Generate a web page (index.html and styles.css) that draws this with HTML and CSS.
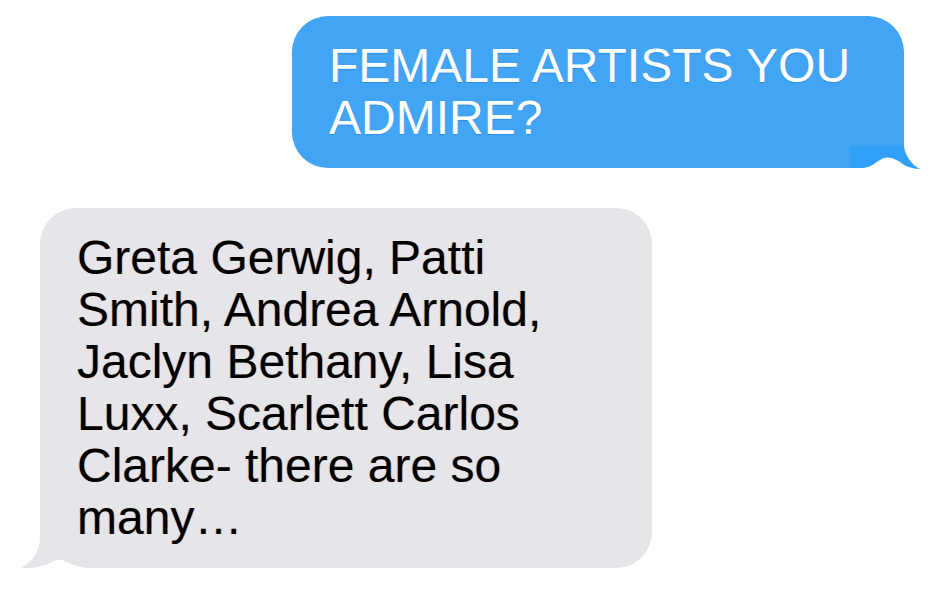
FILE: index.html
```html
<!DOCTYPE html>
<html>
<head>
<meta charset="utf-8">
<link rel="stylesheet" href="styles.css">
</head>
<body>
<div class="thread">
  <div class="bubble sent">
    <p class="text">FEMALE ARTISTS YOU ADMIRE?</p>
    <svg class="tail tail-sent" width="72" height="24" viewBox="0 0 72 24">
      <rect x="0" y="0" width="72" height="24" fill="#ffffff"/>
      <path d="M0 0 H54 C55 10 62 19 70 23 C64 23 58 21 54 19 C48 14 40 10 34 12 C28 14 24 20 14 22 H0 Z" fill="#31a0f8"/>
    </svg>
  </div>
  <div class="bubble received">
    <p class="text">Greta Gerwig, Patti Smith, Andrea Arnold, Jaclyn Bethany, Lisa Luxx, Scarlett Carlos Clarke- there are so many…</p>
    <svg class="tail tail-received" width="74" height="32" viewBox="0 0 74 32">
      <rect x="0" y="0" width="74" height="32" fill="#ffffff"/>
      <path d="M22 0 C22 14 14 24 2 31 C14 31 24 28 32 25 C36 22 40 21 44 22 C50 24 58 30 74 30 L74 0 Z" fill="#e4e4e9"/>
    </svg>
  </div>
</div>
</body>
</html>
```
FILE: styles.css
```css
html, body {
  margin: 0;
  padding: 0;
  background: #ffffff;
}

.thread {
  display: flex;
  flex-direction: column;
  gap: 40px;
  padding-top: 16px;
}

.bubble {
  position: relative;
  width: 612px;
  box-sizing: border-box;
  padding: 24px 36px 24px 37px;
  border-radius: 36px;
  font-family: "Liberation Sans", Arial, Helvetica, sans-serif;
  font-size: 48px;
  line-height: 52px;
}

.bubble .text {
  margin: 0;
  position: relative;
  z-index: 1;
}

.sent {
  margin-left: 292px;
  height: 152px;
  background: #42a4f5;
  color: #ffffff;
  border-bottom-right-radius: 0;
  text-shadow: 0 1px 0 #2f8ee6;
}

.received {
  margin-left: 40px;
  height: 360px;
  background: #e5e5ea;
  color: #000000;
  border-bottom-left-radius: 0;
  text-shadow: 1px 0 0 rgba(255, 140, 0, 0.3), -1px 0 0 rgba(60, 140, 255, 0.25);
}

.tail {
  position: absolute;
  display: block;
}

.tail-sent {
  left: 558px;
  top: 130px;
}

.tail-received {
  left: -22px;
  top: 330px;
}
```
